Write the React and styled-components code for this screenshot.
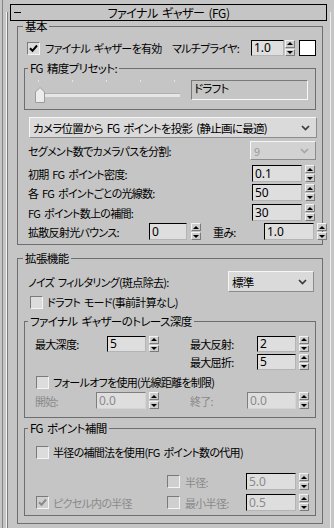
import React from "react"
import styled, { createGlobalStyle } from "styled-components"

const GlobalStyle = createGlobalStyle`
	html, body {
		margin: 0;
		padding: 0;
		background: #c5c5c5;
	}
	body {
		font-family: "Noto Sans CJK JP", "Noto Sans", sans-serif;
		font-size: 11px;
		color: #000;
	}
`

const Page = styled.div`
	width: 334px;
	height: 528px;
	box-sizing: border-box;
	overflow: hidden;
	display: flex;
	padding-left: 2px;
	background: #c5c5c5;
	font-feature-settings: "palt";
	letter-spacing: -0.7px;
	word-spacing: 2px;
`

const Rail = styled.div`
	flex: none;
	width: 3px;
	border-left: 1px solid #858585;
`

const Rollout = styled.div`
	flex: none;
	width: 325px;
	box-sizing: border-box;
	margin-top: 12px;
	border-left: 1px solid #f4f4f4;
	border-right: 1px solid #ececec;
	box-shadow: inset 1px 0 0 #7c7c7c;
	display: flex;
	flex-direction: column;
`

const Header = styled.div`
	margin: -8px 3px 0 3px;
	height: 17px;
	box-sizing: border-box;
	border: 1px solid #000;
	display: grid;
	grid-template-columns: 14px 1fr 14px;
	align-items: center;
	line-height: 15px;
	font-size: 12px;
	letter-spacing: -0.5px;
`

const Minus = styled.span`
	width: 7px;
	height: 1px;
	margin-left: 3px;
	background: #000;
`

const Title = styled.span`
	text-align: center;
	white-space: nowrap;
`

const Group = styled.fieldset`
	margin: ${({ $mt }) => $mt || 0}px ${({ $mr }) => $mr}px 0 ${({ $ml }) => $ml}px;
	padding: 0 0 ${({ $pb }) => $pb || 0}px 0;
	border: 1px solid #6e6e6e;
	min-width: 0;
	display: flex;
	flex-direction: column;
`

const Legend = styled.legend`
	margin-left: ${({ $ml }) => $ml}px;
	padding: 0 2px;
	height: 11px;
	line-height: 11px;
	white-space: nowrap;
	font-size: 11.5px;
	letter-spacing: -0.6px;
`

const Row = styled.div`
	display: flex;
	align-items: center;
	height: ${({ $h }) => $h || 17}px;
	margin-top: ${({ $mt }) => $mt || 0}px;
	padding: 0 ${({ $pr }) => $pr || 0}px 0 ${({ $pl }) => $pl || 0}px;
`

const Label = styled.span`
	flex: none;
	white-space: nowrap;
	line-height: 14px;
	width: ${({ $w }) => ($w ? `${$w}px` : "auto")};
	margin-left: ${({ $ml }) => $ml || 0}px;
	padding-left: ${({ $pl }) => $pl || 0}px;
	color: ${({ $dim }) => ($dim ? "#8a8a8a" : "#000")};
`

const Push = styled.div`
	margin-left: auto;
	display: flex;
	align-items: center;
`

const Cell = styled.div`
	flex: none;
	width: ${({ $w }) => $w}px;
	display: flex;
	align-items: center;
`

const Field = styled.div`
	flex: none;
	box-sizing: border-box;
	width: ${({ $w }) => $w}px;
	height: ${({ $h }) => $h || 17}px;
	margin-left: ${({ $ml }) => $ml || 0}px;
	padding-left: 2px;
	background: #dedede;
	border: 1px solid;
	border-color: ${({ $off }) => ($off ? "#7e7e7e #d4d4d4 #d4d4d4 #7e7e7e" : "#000 #b4b4b4 #b4b4b4 #000")};
	color: ${({ $dim }) => ($dim ? "#8a8a8a" : "#000")};
	font-family: "Noto Sans", sans-serif;
	letter-spacing: 0;
	font-size: 12px;
	line-height: ${({ $h }) => ($h || 17) - 2}px;
`

const Spinner = styled.div`
	flex: none;
	width: 10px;
	height: ${({ $h }) => $h || 17}px;
	margin-left: ${({ $ml }) => ($ml === undefined ? 3 : $ml)}px;
	display: flex;
	flex-direction: column;
	gap: 1px;
`

const SpinButton = styled.div`
	flex: 1;
	box-sizing: border-box;
	background: #cdcdcd;
	border: 1px solid;
	border-color: #f2f2f2 #7a7a7a #7a7a7a #f2f2f2;
	display: flex;
	align-items: center;
	justify-content: center;

	&::after {
		content: "";
		border-left: 3px solid transparent;
		border-right: 3px solid transparent;
		${({ $down }) => ($down ? "border-top: 3px solid #000;" : "border-bottom: 3px solid #000;")}
	}
`

const Swatch = styled.div`
	flex: none;
	width: 17px;
	height: 16px;
	box-sizing: border-box;
	margin-left: 4px;
	background: #fff;
	border: 1px solid #000;
`

const Box = styled.div`
	flex: none;
	width: 13px;
	height: 13px;
	box-sizing: border-box;
	margin-left: ${({ $ml }) => $ml || 0}px;
	background: ${({ $off }) => ($off ? "#cfcfcf" : "#dcdcdc")};
	border: 1px solid;
	border-color: #7a7a7a #f4f4f4 #f4f4f4 #7a7a7a;
	display: flex;
	align-items: center;
	justify-content: center;
`

const Select = styled.div`
	flex: none;
	box-sizing: border-box;
	width: ${({ $w }) => ($w ? `${$w}px` : "auto")};
	height: ${({ $h }) => $h || 21}px;
	margin: ${({ $m }) => $m || "0"};
	padding: 0 6px 0 3px;
	display: flex;
	align-items: center;
	justify-content: space-between;
	background: ${({ $off }) => ($off ? "#d2d2d2" : "#dadada")};
	border: 1px solid;
	border-color: #f6f6f6 #8c8c8c #8c8c8c #f6f6f6;
	color: ${({ $off }) => ($off ? "#9a9a9a" : "#000")};
	white-space: nowrap;
	font-size: ${({ $fs }) => $fs || 11}px;
`

const Slider = styled.div`
	flex: none;
	width: 145px;
	align-self: flex-start;
	display: flex;
	flex-direction: column;
`

const Ticks = styled.div`
	display: flex;
	justify-content: space-between;
	padding: 0 5px 0 3px;
	height: 2px;
`

const Tick = styled.span`
	width: 1px;
	height: 2px;
	background: #e6e6e6;
`

const Track = styled.div`
	display: flex;
	align-items: center;
	margin-top: 5px;
	height: 16px;
`

const Groove = styled.div`
	flex: 1;
	height: 3px;
	background: #e6e6e6;
	border-top: 1px solid #b0b0b0;
`

const Preset = styled.div`
	flex: none;
	width: 117px;
	height: 20px;
	box-sizing: border-box;
	margin-left: 11px;
	padding-left: 2px;
	border: 1px solid;
	border-color: #7a7a7a #f8f8f8 #f8f8f8 #7a7a7a;
	line-height: 15px;
	font-size: 11.5px;
`

const Chevron = ({ off }) => (
	<svg width="9" height="6" viewBox="0 0 9 6">
		<path d="M1 1 L4.5 4.5 L8 1" fill="none" stroke={off ? "#a6a6a6" : "#3a3a3a"} strokeWidth="1.7" />
	</svg>
)

const Tickmark = ({ off }) => (
	<svg width="9" height="9" viewBox="0 0 9 9">
		<path d="M1 4.2 L3.5 6.8 L8 1.5" fill="none" stroke={off ? "#8a8a8a" : "#000"} strokeWidth="2" />
	</svg>
)

const Check = ({ on, off, ml }) => (
	<Box $off={off} $ml={ml}>
		{on && <Tickmark off={off} />}
	</Box>
)

const Spin = ({ h, ml }) => (
	<Spinner $h={h} $ml={ml}>
		<SpinButton />
		<SpinButton $down />
	</Spinner>
)

const SpinRow = ({ label, value, mt }) => (
	<Row $mt={mt} $pl={10} $pr={7}>
		<Label>{label}</Label>
		<Push>
			<Field $w={50}>{value}</Field>
			<Spin />
		</Push>
	</Row>
)

export default function App() {
	return (
		<>
			<GlobalStyle />
			<Page>
				<Rail />
				<Rollout>
					<Header>
						<Minus />
						<Title>ファイナル ギャザー (FG)</Title>
					</Header>

					<Group $ml={10} $mr={7} $pb={4}>
						<Legend $ml={5}>基本</Legend>
						<Row $mt={8} $h={16} $pl={9} $pr={6}>
							<Check on />
							<Label $ml={5}>ファイナル ギャザーを有効</Label>
							<Push>
								<Label $w={79}>マルチプライヤ:</Label>
								<Field $w={33} $h={16}>1.0</Field>
								<Spin h={16} ml={1} />
								<Swatch />
							</Push>
						</Row>

						<Group $mt={7} $ml={6} $mr={6} $pb={9}>
							<Legend $ml={3}>FG 精度プリセット:</Legend>
							<Row $mt={6} $h={20} $pl={10}>
								<Slider>
									<Ticks>
										<Tick />
										<Tick />
										<Tick />
										<Tick />
										<Tick />
									</Ticks>
									<Track>
										<svg width="10" height="16" viewBox="0 0 10 16">
											<polygon points="0.5,5 5,0.5 9.5,5 9.5,15.5 0.5,15.5" fill="#ececec" stroke="#9c9c9c" />
										</svg>
										<Groove />
									</Track>
								</Slider>
								<Preset>ドラフト</Preset>
							</Row>
						</Group>

						<Select $m="7px 5px 0 11px" $fs={11.5}>
							<span>カメラ位置から FG ポイントを投影 (静止画に最適)</span>
							<Chevron />
						</Select>

						<Row $mt={3} $h={19} $pl={10} $pr={6}>
							<Label>セグメント数でカメラパスを分割:</Label>
							<Push>
								<Select $w={66} $h={19} $off>
									<span>9</span>
									<Chevron off />
								</Select>
							</Push>
						</Row>

						<SpinRow mt={5} label="初期 FG ポイント密度:" value="0.1" />
						<SpinRow mt={2} label="各 FG ポイントごとの光線数:" value="50" />
						<SpinRow mt={3} label="FG ポイント数上の補間:" value="30" />

						<Row $mt={2} $pl={10} $pr={7}>
							<Label $w={121}>拡散反射光バウンス:</Label>
							<Field $w={38}>0</Field>
							<Spin ml={4} />
							<Label $w={51} $pl={12}>重み:</Label>
							<Field $w={50}>1.0</Field>
							<Spin />
						</Row>
					</Group>

					<Group $mt={8} $ml={10} $mr={7} $pb={7}>
						<Legend $ml={5}>拡張機能</Legend>
						<Row $mt={7} $h={21} $pl={10} $pr={8}>
							<Label>ノイズ フィルタリング(斑点除去):</Label>
							<Push>
								<Select $w={86} $fs={11.5}>
									<span>標準</span>
									<Chevron />
								</Select>
							</Push>
						</Row>
						<Row $mt={2} $h={16} $pl={12}>
							<Check />
							<Label $ml={4}>ドラフト モード(事前計算なし)</Label>
						</Row>

						<Group $mt={6} $ml={6} $mr={6} $pb={8}>
							<Legend $ml={3}>ファイナル ギャザーのトレース深度</Legend>
							<Row $mt={9} $h={16} $pl={10} $pr={6}>
								<Label $w={72}>最大深度:</Label>
								<Field $w={39} $h={16}>5</Field>
								<Spin h={16} />
								<Push>
									<Label $w={67}>最大反射:</Label>
									<Field $w={39} $h={16}>2</Field>
									<Spin h={16} />
								</Push>
							</Row>
							<Row $mt={2} $h={16} $pl={10} $pr={6}>
								<Push>
									<Label $w={67}>最大屈折:</Label>
									<Field $w={39} $h={16}>5</Field>
									<Spin h={16} />
								</Push>
							</Row>
							<Row $mt={4} $h={16} $pl={11}>
								<Check />
								<Label $ml={4}>フォールオフを使用(光線距離を制限)</Label>
							</Row>
							<Row $mt={2} $pl={10} $pr={6}>
								<Label $w={61} $dim>開始:</Label>
								<Field $w={50} $off $dim>0.0</Field>
								<Spin />
								<Push>
									<Label $w={57} $pl={10} $dim>終了:</Label>
									<Field $w={49} $off $dim>0.0</Field>
									<Spin />
								</Push>
							</Row>
						</Group>

						<Group $mt={5} $ml={6} $mr={6} $pb={4}>
							<Legend $ml={3}>FG ポイント補間</Legend>
							<Row $mt={10} $h={16} $pl={11}>
								<Check />
								<Label $ml={4}>半径の補間法を使用(FG ポイント数の代用)</Label>
							</Row>
							<Row $mt={13} $pl={11} $pr={6}>
								<Cell $w={131} />
								<Check off />
								<Label $w={61} $ml={5} $dim>半径:</Label>
								<Field $w={50} $dim>5.0</Field>
								<Spin />
							</Row>
							<Row $mt={4} $pl={11} $pr={6}>
								<Cell $w={131}>
									<Check on off />
									<Label $ml={4} $dim>ピクセル内の半径</Label>
								</Cell>
								<Check off />
								<Label $w={61} $ml={5} $dim>最小半径:</Label>
								<Field $w={50} $dim>0.5</Field>
								<Spin />
							</Row>
						</Group>
					</Group>
				</Rollout>
			</Page>
		</>
	)
}
